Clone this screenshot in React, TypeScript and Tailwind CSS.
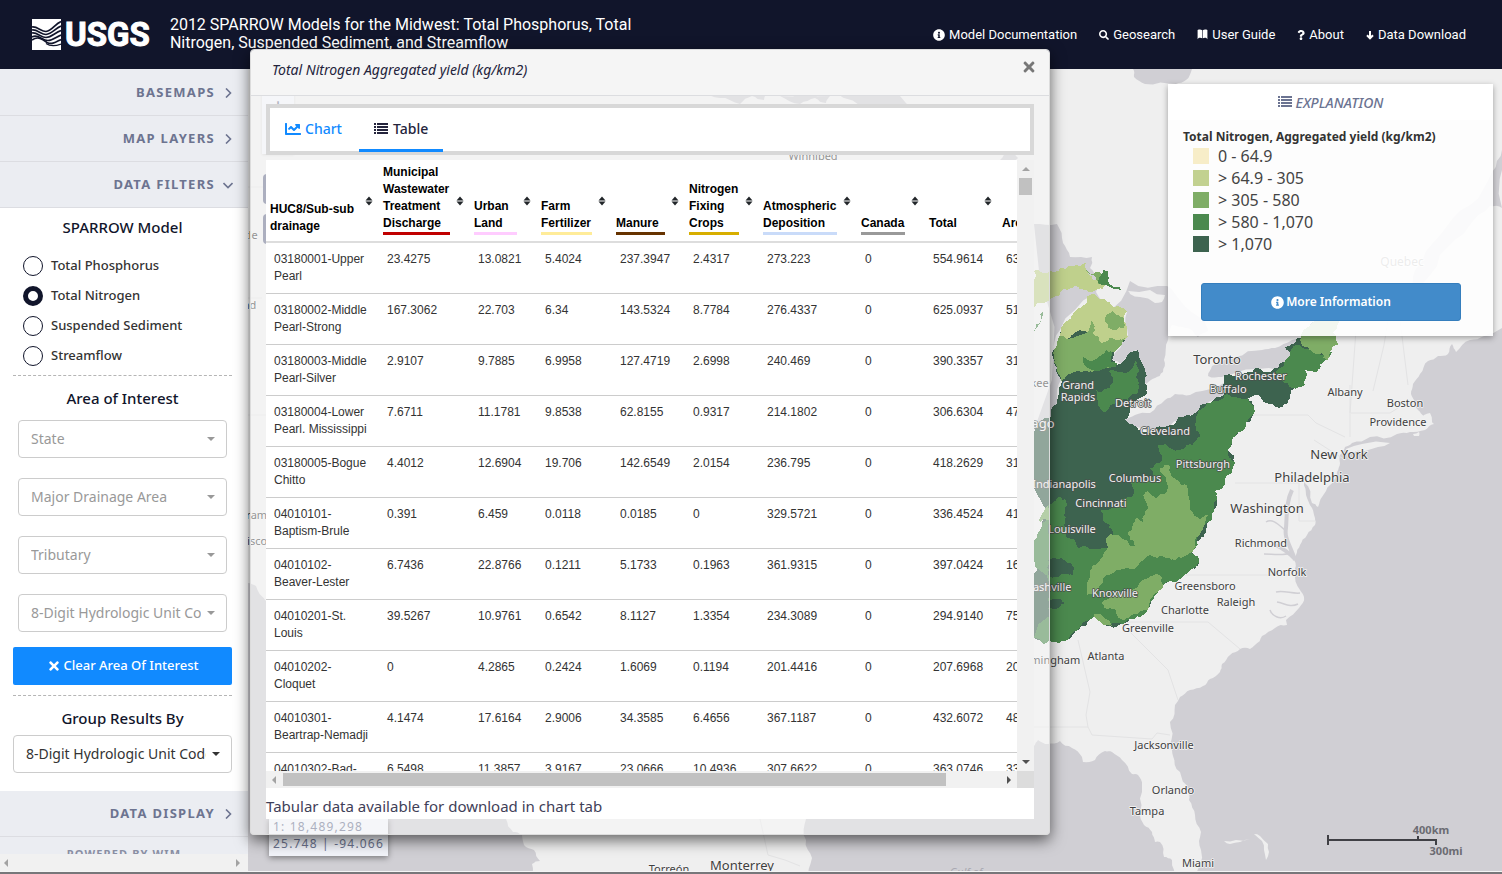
import React, { useState } from "react";
import { FaChartLine, FaInfoCircle, FaQuestion, FaSearch, FaTimes } from "react-icons/fa";

/* ---------- icons ---------- */

function ListIcon({ className }: { className: string }) {
  return (
    <svg viewBox="0 0 14 12" className={className} fill="currentColor" aria-hidden="true" shapeRendering="crispEdges">
      {[0, 3, 6, 9].map((y) => (
        <g key={y}>
          <rect x="0" y={y} width="2" height="2" />
          <rect x="3" y={y} width="11" height="2" />
        </g>
      ))}
    </svg>
  );
}

function SortIcon() {
  return (
    <svg viewBox="0 0 8 10" className="absolute right-[6px] top-1/2 h-[10px] w-2 -translate-y-1/2" fill="#212529" aria-hidden="true">
      <path d="M4 0.5 7.5 4.4H0.5zM4 9.5 0.5 5.6H7.5z" />
    </svg>
  );
}

function BookIcon() {
  return (
    <svg viewBox="0 0 11 11" className="size-[11px]" fill="currentColor" aria-hidden="true">
      <path d="M.6 1C2.4.3 4 .4 5.200 1.200V9.200C4 8.500 2.600 8.500 1.600 9L.6 10.300zM10.400 1C8.600.3 7 .4 5.800 1.200V9.200C7 8.500 8.400 8.500 9.400 9L10.400 10.300z" />
    </svg>
  );
}

function DownIcon() {
  return (
    <svg viewBox="0 0 8 10" className="h-[10px] w-2" fill="none" stroke="currentColor" strokeWidth="2" aria-hidden="true">
      <path d="M4 1V8.500M1 5.300 4 8.300 7 5.300" />
    </svg>
  );
}

function Chevron({ down = false }: { down?: boolean }) {
  return (
    <svg viewBox="0 0 10 10" className="size-[10px]" fill="none" stroke="#6d7490" strokeWidth="1.600" aria-hidden="true">
      <path d={down ? "M0.500 3 5 7.500 9.500 3" : "M3 0.500 7.500 5 3 9.500"} />
    </svg>
  );
}

function Logo() {
  return (
    <div className="flex h-8 items-center gap-1 text-white" aria-label="USGS">
      <svg viewBox="0 0 29 31" className="h-[31px] w-[29px]" aria-hidden="true">
        <path fill="#fff" d="M0 0H29V31H0z" />
        <g fill="none" stroke="#11152b" strokeWidth="1.700">
          <path d="M0 8C5 7 9 12.500 14 12.500 20 12 23 5 29 2.500" />
          <path d="M0 11C5 10 9 15.500 14 15.500 20 15 23 9.500 29 7" />
          <path d="M0 14C5 13 9 18.500 14 18.500 20 18 23 13.500 29 11.500" />
          <path d="M0 18C6 14.500 10 21.500 16 21.500 21 21.500 24 18 29 16" />
          <path d="M0 21C6 16.500 11 20.500 15 23.500 20 26 24 23 29 20.500" />
          <path d="M14 24.500C19 28 24 27 29 25" strokeWidth="1.200" />
        </g>
      </svg>
      <span className="font-['Liberation_Sans_Narrow','Roboto',sans-serif] text-[33px] leading-8 font-bold [-webkit-text-stroke:1px_white]">
        USGS
      </span>
    </div>
  );
}

/* ---------- map ---------- */

type Pt = [number, number];

const parse = (s: string): Pt[] => s.trim().split(/\s+/).map((p) => p.split(",").map(Number) as Pt);

/** Closed outline whose edges are broken up by deterministic midpoint displacement. */
function rough(s: string, amp = 0.22, depth = 3): string {
  let pts = parse(s);
  for (let d = 0; d < depth; d++) {
    const next: Pt[] = [];
    pts.forEach((a, i) => {
      const b = pts[(i + 1) % pts.length];
      const dx = b[0] - a[0];
      const dy = b[1] - a[1];
      next.push(a);
      if (Math.hypot(dx, dy) > 3) {
        const h = Math.sin((a[0] + b[0]) * 12.9898 + (a[1] + b[1]) * 78.233) * 43758.5453;
        const k = (h - Math.floor(h) - 0.5) * 2 * amp;
        next.push([(a[0] + b[0]) / 2 - dy * k, (a[1] + b[1]) / 2 + dx * k]);
      }
    });
    pts = next;
  }
  return "M" + pts.map((p) => p[0].toFixed(1) + " " + p[1].toFixed(1)).join("L") + "Z";
}

const WATER = "#d0cfd4";
const LAND = "#efefef";
const C = { light: "#bfd08c", mid: "#7fad66", green: "#4b894e", dark: "#3d634f" };

const WATERS = [
  "1502,328 1484,336 1470,340 1456,352 1452,344 1448,354 1438,356 1428,361 1420,374 1413,384 1411,394 1414,400 1418,410 1425,416 1430,418 1434,424 1425,430 1410,432 1397,434 1370,437 1352,443 1345,447 1340,455 1340,463 1337,472 1330,485 1322,497 1318,507 1312,503 1304,482 1306,495 1312,508 1315,518 1315,525 1307,535 1300,545 1296,555 1294,560 1295,572 1300,590 1304,597 1299,608 1286,620 1287,625 1275,628 1262,636 1255,645 1250,649 1240,649 1230,655 1222,664 1220,672 1210,679 1203,686 1190,690 1180,697 1175,705 1170,722 1170,745 1173,756 1180,772 1188,790 1189,800 1195,815 1201,832 1201,850 1195,880 1400,1000 1700,1000 1700,328",
  "1176,880 1172,860 1164,857 1160,842 1155,842 1152,832 1144,825 1140,812 1142,785 1138,775 1132,774 1122,760 1112,752 1105,751 1095,760 1083,762 1082,757 1072,748 1060,741 1048,744 1038,740 1034,746 1000,748 950,760 880,768 830,790 812,805 806,819 806,840 812,858 808,880",
  "248,583 256,586 266,601 300,650 350,720 420,760 480,790 506,819 513,832 522,835 524,845 534,850 540,861 532,864 534,880 400,1000 100,1000 100,700",
  "1133,69 1134,77 1145,84 1176,84 1186,80 1192,69 1180,60 1145,60",
  "1034,224 1057,224 1063,243 1070,257 1092,257 1090,268 1098,280 1096,292 1110,310 1108,318 1130,281 1167,286 1180,300 1205,322 1208,331 1198,337 1185,328 1172,325 1168,340 1164,360 1163,372 1155,378 1146,384 1142,362 1136,350 1122,364 1112,360 1128,335 1127,312 1094,294 1060,330 1054,355 1061,380 1057,400 1048,420 1034,430",
  "1123,420 1135,415 1150,413 1165,400 1175,394 1190,395 1215,389 1226,382 1226,396 1205,407 1185,418 1165,428 1150,433 1135,427",
  "1208,376 1212,366 1235,357 1262,350 1275,348 1292,340 1300,338 1295,352 1290,362 1280,370 1235,373 1222,377",
  "1502,150 1492,172 1470,205 1440,235 1415,270 1405,295 1412,292 1440,255 1470,225 1490,206 1502,208",
  "700,90 770,90 764,100 752,96 740,104 720,98",
  "835,92 900,96 930,120 905,118 870,110",
  "780,96 830,96 826,103 815,98 800,104",
  "1000,160 1010,150 1018,158 1012,162",
];

const ISLANDS = [
  "1128,291 1150,290 1165,295 1162,302 1155,303 1140,297 1130,294",
  "1346,449 1362,444 1390,443 1378,447 1365,451 1350,454",
  "1424,415 1430,413 1432,422 1426,428 1421,428",
  "1224,841 1236,840 1250,839 1240,842 1230,844",
  "1254,834 1260,836 1268,844 1269,852 1266,860 1264,850 1262,841",
  "1413,434 1419,432 1419,436 1414,436",
];

const BAYS = "M1295 560C1290 545 1284 538 1286 528 1287 515 1286 502 1292 490M1294 558C1288 552 1282 548 1276 545";

const INLETS =
  "M1285 530C1278 524 1272 518 1266 522M1300 593C1292 594 1284 590 1276 592M1298 604C1290 608 1284 603 1277 602M1286 616C1280 620 1272 616 1270 610M1290 553C1284 556 1272 554 1264 554";

const BORDERS =
  "M1200 415H1308L1316 423 1345 437M1235 483H1299V521H1315M1148 575H1296M1034 727H1088L1092 735 1152 739 1157 733 1170 735M1078 640 1090 692 1086 715 1088 727M1120 622H1208L1240 649M1120 622 1138 640 1168 670 1178 700M1350 437V385M1351 413H1390L1398 408M1350 413 1356 330M1373 391 1384 345 1388 320M1408 385 1400 320M1034 423H1093M1093 423V480M1192 415V470M1314 440 1345 460M248 187H266M248 415H266M248 298H262M760 819 768 855 785 860 800 866";

interface Zone {
  fill: string;
  pts: string;
}

const ZONES: Zone[] = [
  { fill: C.light, pts: "1034,271 1050,271 1070,266 1086,263 1086,269 1096,280 1108,284 1103,289 1094,291 1076,286 1062,290 1051,298 1044,303 1034,308" },
  { fill: C.mid, pts: "1086,270 1100,272 1103,285 1096,280" },
  { fill: C.green, pts: "1101,275 1103,270 1108,271 1109,284 1113,287 1120,287 1121,290 1112,288 1103,285 1098,281" },
  {
    fill: C.dark,
    pts: "1034,432 1050,418 1058,398 1061,385 1054,362 1054,350 1060,335 1061,327 1074,312 1080,308 1086,304 1087,296 1094,294 1106,300 1118,306 1127,312 1127,332 1125,340 1122,345 1114,352 1112,360 1120,364 1126,358 1130,352 1138,350 1142,362 1145,380 1145,396 1135,402 1130,408 1124,420 1130,424 1140,432 1155,430 1165,427 1195,413 1210,403 1224,395 1224,375 1245,373 1270,372 1278,368 1288,360 1290,352 1285,347 1298,338 1310,325 1322,312 1340,316 1333,332 1338,345 1330,352 1325,360 1318,371 1305,370 1305,385 1295,388 1290,395 1288,402 1275,407 1263,401 1257,395 1248,398 1254,406 1253,415 1240,425 1236,435 1232,445 1228,450 1235,463 1225,480 1215,492 1217,500 1208,522 1200,540 1192,552 1199,562 1190,570 1175,577 1165,583 1155,595 1148,608 1143,615 1132,618 1122,624 1110,626 1095,614 1087,624 1080,627 1072,636 1065,641 1054,642 1046,638 1034,638",
  },
  { fill: C.light, pts: "1061,327 1074,312 1080,308 1086,304 1087,296 1094,294 1106,300 1118,306 1127,312 1127,332 1125,340 1102,344 1092,334 1060,338" },
  { fill: C.mid, pts: "1105,322 1112,311 1116,315 1124,318 1124,328 1116,330 1108,328" },
  { fill: C.mid, pts: "1060,336 1086,333 1091,320 1093,333 1101,343 1112,338 1125,338 1122,345 1114,352 1108,355 1112,366 1095,370 1082,372 1075,372 1061,381 1054,362 1055,348" },
  { fill: C.green, pts: "1083,357 1092,361 1106,350 1112,352 1111,362 1118,364 1110,368 1095,371 1085,366" },
  { fill: C.green, pts: "1109,371 1122,372 1136,360 1136,378 1138,392 1128,400 1113,404 1105,412 1098,406 1096,390 1110,388" },
  {
    fill: C.green,
    pts: "1224,395 1210,403 1198,412 1195,425 1200,435 1193,445 1180,450 1165,443 1158,445 1162,460 1150,468 1152,478 1130,480 1133,495 1120,503 1098,508 1103,520 1112,530 1110,546 1098,549 1078,548 1068,538 1065,520 1066,500 1060,497 1048,505 1040,530 1034,540 1034,638 1054,642 1065,641 1080,627 1095,614 1110,626 1122,624 1143,615 1155,595 1165,583 1199,562 1192,552 1208,522 1217,500 1215,492 1225,480 1235,463 1228,450 1236,435 1253,415 1254,406 1248,398 1236,397",
  },
  { fill: C.dark, pts: "1048,560 1062,558 1072,565 1073,575 1058,577 1048,575" },
  { fill: C.dark, pts: "1044,602 1060,599 1065,603 1060,607 1045,607" },
  { fill: C.green, pts: "1288,358 1291,350 1296,345 1310,350 1332,352 1325,360 1318,371 1305,370 1305,385 1292,388 1282,380 1276,371 1284,366" },
  { fill: C.mid, pts: "1300,340 1312,324 1322,312 1340,316 1333,332 1338,345 1330,352 1327,361 1322,353 1312,351 1303,346" },
  {
    fill: C.mid,
    pts: "1160,468 1170,466 1176,480 1187,485 1190,510 1200,520 1208,515 1203,530 1195,540 1192,552 1175,560 1160,556 1140,562 1120,570 1103,578 1095,594 1087,595 1088,582 1098,563 1103,555 1110,534 1125,540 1135,546 1128,532 1137,518 1143,522 1143,495 1148,491 1156,498 1168,488 1163,475",
  },
  { fill: C.mid, pts: "1102,602 1120,592 1140,582 1162,577 1163,585 1150,600 1148,610 1130,616 1122,620 1116,610 1104,608" },
  { fill: C.mid, pts: "1094,614 1104,618 1112,626 1102,624" },
  { fill: C.mid, pts: "1038,520 1048,505 1050,520 1040,522" },
  { fill: C.green, pts: "1034,331 1040,314 1043,311 1041,320 1035,330" },
];

interface Label {
  t: string;
  x: number;
  y: number;
  s?: 11 | 12 | 13;
  inv?: boolean;
}

const LABELS: Label[] = [
  { t: "Toronto", x: 1217, y: 364, s: 13 },
  { t: "Rochester", x: 1261, y: 380, inv: true },
  { t: "Buffalo", x: 1228, y: 393, inv: true },
  { t: "Detroit", x: 1133, y: 407, inv: true },
  { t: "Cleveland", x: 1165, y: 435, inv: true },
  { t: "Pittsburgh", x: 1203, y: 468, inv: true },
  { t: "Columbus", x: 1135, y: 482, inv: true },
  { t: "Cincinnati", x: 1101, y: 507, inv: true },
  { t: "Louisville", x: 1072, y: 533, inv: true },
  { t: "Indianapolis", x: 1064, y: 488, inv: true },
  { t: "Nashville", x: 1048, y: 591, inv: true },
  { t: "Knoxville", x: 1115, y: 597, inv: true },
  { t: "Grand", x: 1078, y: 389, inv: true },
  { t: "Rapids", x: 1078, y: 401, inv: true },
  { t: "Chicago", x: 1030, y: 428, s: 13, inv: true },
  { t: "Milwaukee", x: 1021, y: 387 },
  { t: "Birmingham", x: 1048, y: 664 },
  { t: "Atlanta", x: 1106, y: 660 },
  { t: "Greenville", x: 1148, y: 632 },
  { t: "Charlotte", x: 1185, y: 614 },
  { t: "Raleigh", x: 1236, y: 606 },
  { t: "Greensboro", x: 1205, y: 590 },
  { t: "Norfolk", x: 1287, y: 576 },
  { t: "Richmond", x: 1261, y: 547 },
  { t: "Washington", x: 1267, y: 513, s: 13 },
  { t: "Philadelphia", x: 1312, y: 482, s: 13 },
  { t: "New York", x: 1339, y: 459, s: 13 },
  { t: "Providence", x: 1398, y: 426 },
  { t: "Boston", x: 1405, y: 407 },
  { t: "Albany", x: 1345, y: 396 },
  { t: "Jacksonville", x: 1164, y: 749 },
  { t: "Orlando", x: 1173, y: 794 },
  { t: "Tampa", x: 1147, y: 815 },
  { t: "Miami", x: 1198, y: 867 },
  { t: "Monterrey", x: 742, y: 870, s: 13 },
  { t: "Torreón", x: 669, y: 873 },
  { t: "Quebec", x: 1402, y: 266, s: 12 },
  { t: "Winnipeg", x: 813, y: 160 },
  { t: "Seattle", x: 240, y: 239 },
  { t: "Portland", x: 234, y: 309 },
  { t: "Sacram", x: 248, y: 519 },
  { t: "San Francisco", x: 232, y: 545 },
];

function MapCanvas() {
  return (
    <svg
      viewBox="248 69 1254 802"
      preserveAspectRatio="xMaxYMid slice"
      className="absolute inset-0 size-full bg-[#efefef]"
      role="img"
      aria-label="Map of total nitrogen aggregated yield"
    >
      <rect x="248" y="69" width="1254" height="802" fill={LAND} />
      {WATERS.map((p) => (
        <path key={p} d={rough(p, 0.12, 2)} fill={WATER} />
      ))}
      {ISLANDS.map((p) => (
        <path key={p} d={rough(p, 0.12, 1)} fill={LAND} />
      ))}
      <path d={BAYS} fill="none" stroke={WATER} strokeWidth="4" />
      <path d={INLETS} fill="none" stroke={WATER} strokeWidth="1.500" />
      <path d={BORDERS} fill="none" stroke="#e3e3e4" strokeWidth="1" />
      <g shapeRendering="crispEdges">
        {ZONES.map((z) => (
          <path key={z.pts} d={rough(z.pts)} fill={z.fill} />
        ))}
      </g>
      <g textAnchor="middle" strokeLinejoin="round" className="font-['Noto_Sans',sans-serif] [paint-order:stroke]">
        {LABELS.map((l) => (
          <text
            key={l.t}
            x={l.x}
            y={l.y}
            fontSize={l.s ?? 11}
            fill={l.inv ? "#f2f2f2" : "#3f3f3f"}
            stroke={l.inv ? "#4a4f4c" : "#f5f5f5"}
            strokeWidth="1.500"
          >
            {l.t}
          </text>
        ))}
        <text x="966" y="876" fontSize="11" fontStyle="italic" fill="#a9a9b2">
          Gulf of
        </text>
      </g>
      <path d="M1328 835V845M1327 840H1437M1418 840V836M1436 840V845" fill="none" stroke="#404045" strokeWidth="2" />
      <g fontSize="11" fontWeight="700" fill="#6b6b72" textAnchor="middle" className="font-['Noto_Sans',sans-serif]">
        <text x="1431" y="834">400km</text>
        <text x="1446" y="855">300mi</text>
      </g>
    </svg>
  );
}

const CLASSES = [
  { label: "0 - 64.9", swatch: "bg-[#f7edc8]" },
  { label: "> 64.9 - 305", swatch: "bg-[#c2d190]" },
  { label: "> 305 - 580", swatch: "bg-[#7fad66]" },
  { label: "> 580 - 1,070", swatch: "bg-[#4b894e]" },
  { label: "> 1,070", swatch: "bg-[#3d634f]" },
];

function Explanation() {
  return (
    <section className="absolute top-[15px] right-[9px] w-[325px] bg-white/90 shadow-[0_2px_6px_rgba(0,0,0,0.35)]">
      <h2 className="flex h-9 items-center justify-center gap-1 bg-white text-[14px] font-medium text-[#6b7391] italic">
        <ListIcon className="h-3 w-[14px]" />
        EXPLANATION
      </h2>
      <div className="px-[15px] pt-2 pb-[15px]">
        <h3 className="text-[12px] leading-[17px] font-bold text-[#333]">Total Nitrogen, Aggregated yield (kg/km2)</h3>
        <ul className="pl-[10px] text-[16px] leading-[22px] text-[#444]">
          {CLASSES.map((c) => (
            <li key={c.label} className="flex items-center gap-[9px]">
              <span className={"size-4 " + c.swatch} />
              {c.label}
            </li>
          ))}
        </ul>
        <div className="pt-7 pr-[17px] pl-[18px]">
          <button
            type="button"
            className="flex h-[38px] w-full items-center justify-center gap-[2px] rounded-[3px] border border-[#357ebd] bg-[#428bca] text-[12px] font-semibold text-white"
          >
            <FaInfoCircle className="size-[13px]" />
            More Information
          </button>
        </div>
      </div>
    </section>
  );
}

/* ---------- sidebar ---------- */

function SectionRow({ label, open = false }: { label: string; open?: boolean }) {
  return (
    <button
      type="button"
      aria-expanded={open}
      className="flex h-[46px] w-full shrink-0 items-center justify-end gap-2 border-b border-[#dcdde2] bg-[#ebedf2] pr-[15px] text-[13px] font-bold tracking-widest text-[#6d7490]"
    >
      {label}
      <Chevron down={open} />
    </button>
  );
}

function Picker({ label, muted = false }: { label: string; muted?: boolean }) {
  return (
    <label className={"relative block " + (muted ? "text-[#999]" : "text-[#333]")}>
      <span className="sr-only">{label}</span>
      <select className="h-[38px] w-full appearance-none rounded-[4px] border border-[#ccc] bg-white pr-[25px] pb-[2px] pl-3 text-[14px]">
        <option>{label}</option>
      </select>
      <svg viewBox="0 0 8 4" className="pointer-events-none absolute top-[17px] right-3 h-1 w-2" fill="currentColor" aria-hidden="true">
        <path d="M0 0H8L4 4z" />
      </svg>
    </label>
  );
}

const MODELS = ["Total Phosphorus", "Total Nitrogen", "Suspended Sediment", "Streamflow"];

function Sidebar() {
  const [model, setModel] = useState("Total Nitrogen");
  return (
    <aside className="flex w-[248px] shrink-0 flex-col overflow-hidden bg-white">
      <div className="flex min-h-0 flex-1 flex-col overflow-hidden border-t border-[#ebedf2]">
        <SectionRow label="BASEMAPS" />
        <SectionRow label="MAP LAYERS" />
        <SectionRow label="DATA FILTERS" open />
        <div className="shrink-0 pt-[7px] pr-4 pb-[18px] pl-[13px]">
          <fieldset className="border-b border-dashed border-[#b5b5b5] pb-1">
            <legend className="w-full pb-3 text-center text-[15px] leading-6 font-medium text-[#11152b]">SPARROW Model</legend>
            {MODELS.map((m) => (
              <label key={m} className="flex h-[30px] items-center gap-2 pl-[10px] text-[13px] font-medium text-[#333]">
                <input
                  type="radio"
                  name="model"
                  checked={model === m}
                  onChange={() => setModel(m)}
                  className="size-5 appearance-none rounded-full border border-[#11152b] bg-white checked:border-[5px]"
                />
                {m}
              </label>
            ))}
          </fieldset>
          <h3 className="pt-[10px] pb-[10px] text-center text-[15px] leading-6 font-medium text-[#11152b]">Area of Interest</h3>
          <div className="flex flex-col gap-5 px-[5px]">
            <Picker label="State" muted />
            <Picker label="Major Drainage Area" muted />
            <Picker label="Tributary" muted />
            <Picker label="8-Digit Hydrologic Unit Code" muted />
          </div>
          <button
            type="button"
            className="mt-[15px] flex h-[38px] w-full items-center justify-center gap-[3px] rounded-[2px] bg-[#118aff] text-[13px] font-medium text-white"
          >
            <FaTimes className="size-[14px]" />
            Clear Area Of Interest
          </button>
          <h3 className="mt-[10px] border-t border-dashed border-[#b5b5b5] pt-[10px] pb-[5px] text-center text-[15px] leading-6 font-medium text-[#11152b]">
            Group Results By
          </h3>
          <Picker label="8-Digit Hydrologic Unit Code" />
        </div>
        <SectionRow label="DATA DISPLAY" />
        <div className="shrink-0 bg-[#ebedf2] pt-[7px] pb-4 text-center text-[11px] leading-5 font-bold tracking-widest text-[#8a8fa3]">
          POWERED BY WIM
        </div>
      </div>
      <div className="flex h-[17px] shrink-0 items-center justify-between bg-[#f1f1f1] px-1 text-[#a3a3a3]">
        <svg viewBox="0 0 4 8" className="h-2 w-1" fill="currentColor" aria-hidden="true">
          <path d="M4 0V8L0 4z" />
        </svg>
        <svg viewBox="0 0 4 8" className="mr-1 h-2 w-1" fill="currentColor" aria-hidden="true">
          <path d="M0 0V8L4 4z" />
        </svg>
      </div>
    </aside>
  );
}

/* ---------- results window ---------- */

const COLUMNS = [
  { name: "HUC8/Sub-sub drainage", width: "w-[113px]", line: "" },
  { name: "Municipal Wastewater Treatment Discharge", width: "w-[91px]", line: "border-[#c00000]" },
  { name: "Urban Land", width: "w-[67px]", line: "border-[#ffccff]" },
  { name: "Farm Fertilizer", width: "w-[75px]", line: "border-[#ffec99]" },
  { name: "Manure", width: "w-[73px]", line: "border-[#663300]" },
  { name: "Nitrogen Fixing Crops", width: "w-[74px]", line: "border-[#d7ae00]" },
  { name: "Atmospheric Deposition", width: "w-[98px]", line: "border-[#c9dbf9]" },
  { name: "Canada", width: "w-[68px]", line: "border-[#999999]" },
  { name: "Total", width: "w-[73px]", line: "border-transparent" },
  { name: "Area", width: "w-[110px]", line: "border-transparent" },
];

const ROWS = [
  ["03180001-Upper Pearl", "23.4275", "13.0821", "5.4024", "237.3947", "2.4317", "273.223", "0", "554.9614", "63"],
  ["03180002-Middle Pearl-Strong", "167.3062", "22.703", "6.34", "143.5324", "8.7784", "276.4337", "0", "625.0937", "51"],
  ["03180003-Middle Pearl-Silver", "2.9107", "9.7885", "6.9958", "127.4719", "2.6998", "240.469", "0", "390.3357", "31"],
  ["03180004-Lower Pearl. Mississippi", "7.6711", "11.1781", "9.8538", "62.8155", "0.9317", "214.1802", "0", "306.6304", "47"],
  ["03180005-Bogue Chitto", "4.4012", "12.6904", "19.706", "142.6549", "2.0154", "236.795", "0", "418.2629", "31"],
  ["04010101-Baptism-Brule", "0.391", "6.459", "0.0118", "0.0185", "0", "329.5721", "0", "336.4524", "41"],
  ["04010102-Beaver-Lester", "6.7436", "22.8766", "0.1211", "5.1733", "0.1963", "361.9315", "0", "397.0424", "16"],
  ["04010201-St. Louis", "39.5267", "10.9761", "0.6542", "8.1127", "1.3354", "234.3089", "0", "294.9140", "75"],
  ["04010202-Cloquet", "0", "4.2865", "0.2424", "1.6069", "0.1194", "201.4416", "0", "207.6968", "20"],
  ["04010301-Beartrap-Nemadji", "4.1474", "17.6164", "2.9006", "34.3585", "6.4656", "367.1187", "0", "432.6072", "48"],
  ["04010302-Bad-Montreal", "6.5498", "11.3857", "3.9167", "23.0666", "10.4936", "307.6622", "0", "363.0746", "33"],
];

function ResultsTable() {
  return (
    <table className="w-[842px] table-fixed border-collapse text-left font-['Liberation_Sans',Arial,sans-serif] text-[12px] leading-[17px] text-[#333]">
      <thead>
        <tr className="border-b-2 border-[#ddd]">
          {COLUMNS.map((c) => (
            <th key={c.name} className={"relative pt-1 pr-5 pb-[6px] pl-1 align-bottom font-bold text-black " + c.width}>
              <span className={"block " + (c.line ? "border-b-[3px] " + c.line : "")}>{c.name}</span>
              {c.name !== "Area" && <SortIcon />}
            </th>
          ))}
        </tr>
      </thead>
      <tbody>
        {ROWS.map((r) => (
          <tr key={r[0]} className="border-b border-[#ccc]">
            {r.map((v, i) => (
              <td key={i} className={"py-2 pl-2 align-top " + (i === 0 ? "pr-2" : "")}>
                {v}
              </td>
            ))}
          </tr>
        ))}
      </tbody>
    </table>
  );
}

function ResultsWindow() {
  return (
    <div
      role="dialog"
      aria-label="Total Nitrogen Aggregated yield"
      className="absolute top-[49px] bottom-[39px] left-[250px] flex w-[800px] flex-col rounded-[4px] border border-[#dcdcdc] bg-[#f8f8f8]/45 shadow-[0_5px_15px_rgba(0,0,0,0.6)]"
    >
      <div className="flex h-[46px] shrink-0 items-start justify-between rounded-t-[3px] border-b border-[#dcdde0] bg-[#f5f5f5] pt-[9px] pr-[12px] pl-[21px]">
        <h2 className="text-[14px] leading-[22px] text-[#24243c] italic">Total Nitrogen Aggregated yield (kg/km2)</h2>
        <button type="button" aria-label="Close" className="text-[#777]">
          <FaTimes className="size-4" />
        </button>
      </div>
      <div className="flex min-h-0 flex-1 flex-col px-[15px] pt-2 pb-[15px]">
        <div role="tablist" className="flex h-[51px] shrink-0 border-4 border-[#d8d8d8] bg-white text-[14px] font-medium">
          <button type="button" role="tab" className="flex items-center gap-1 px-[15px] pb-[2px] text-[#118aff]">
            <FaChartLine className="size-4" />
            Chart
          </button>
          <button
            type="button"
            role="tab"
            aria-selected="true"
            className="-mb-px ml-[2px] flex items-center gap-[5px] border-b-[3px] border-[#118aff] px-[15px] text-[#24243c]"
          >
            <ListIcon className="h-3 w-[14px]" />
            Table
          </button>
        </div>
        <div className="mt-[5px] flex min-h-0 flex-1">
          <div className="min-w-0 flex-1 overflow-hidden bg-white">
            <ResultsTable />
          </div>
          <div className="flex w-[17px] shrink-0 flex-col items-center bg-[#f1f1f1]">
            <svg viewBox="0 0 8 4" className="my-[7px] h-1 w-2" fill="#a3a3a3" aria-hidden="true">
              <path d="M0 4H8L4 0z" />
            </svg>
            <div className="h-[17px] w-[13px] bg-[#c1c1c1]" />
            <svg viewBox="0 0 8 4" className="mt-auto mb-[7px] h-1 w-2" fill="#505050" aria-hidden="true">
              <path d="M0 0H8L4 4z" />
            </svg>
          </div>
        </div>
        <div className="flex h-[17px] shrink-0 items-center bg-[#f1f1f1]">
          <svg viewBox="0 0 4 8" className="mr-[7px] ml-[6px] h-2 w-1" fill="#a3a3a3" aria-hidden="true">
            <path d="M4 0V8L0 4z" />
          </svg>
          <div className="h-[13px] w-[663px] bg-[#c1c1c1]" />
          <svg viewBox="0 0 4 8" className="mr-[6px] ml-auto h-2 w-1" fill="#505050" aria-hidden="true">
            <path d="M0 0V8L4 4z" />
          </svg>
          <div className="h-full w-[17px] bg-[#dcdcdc]" />
        </div>
        <p className="h-[31px] shrink-0 bg-white pt-[7px] text-[15px] leading-[22px] text-[#3f4058]">
          Tabular data available for download in chart tab
        </p>
      </div>
    </div>
  );
}

/* ---------- page ---------- */

function NavLink({ icon, children }: { icon: React.ReactNode; children: React.ReactNode }) {
  return (
    <a href="#" className="flex items-center gap-1">
      {icon}
      {children}
    </a>
  );
}

export default function App() {
  return (
    <div className="relative flex h-screen flex-col overflow-hidden bg-[#efefef] font-['Noto_Sans',sans-serif]">
      <header className="flex h-[69px] shrink-0 items-center justify-between bg-[#11152b] pr-9 pl-8 font-['Roboto',sans-serif] text-white">
        <div className="flex items-center gap-5">
          <Logo />
          <h1 className="w-[472px] pb-[2px] text-[16px] leading-[18px]">
            2012 SPARROW Models for the Midwest: Total Phosphorus, Total Nitrogen, Suspended Sediment, and Streamflow
          </h1>
        </div>
        <nav className="flex gap-[22px] text-[13px]">
          <NavLink icon={<FaInfoCircle className="size-3" />}>Model Documentation</NavLink>
          <NavLink icon={<FaSearch className="size-[10px]" />}>Geosearch</NavLink>
          <NavLink icon={<BookIcon />}>User Guide</NavLink>
          <NavLink icon={<FaQuestion className="h-[10px] w-2" />}>About</NavLink>
          <NavLink icon={<DownIcon />}>Data Download</NavLink>
        </nav>
      </header>
      <div className="flex min-h-0 flex-1">
        <Sidebar />
        <main className="relative min-w-0 flex-1 overflow-hidden">
          <MapCanvas />
          <div className="absolute top-[11px] left-[14px] flex flex-col items-start text-[#7b8096]">
            <button type="button" aria-label="Zoom in" className="h-[74px] w-8 bg-[#f2f4fa] pb-6 text-[22px] shadow">
              +
            </button>
            <button type="button" aria-label="Home" className="mt-5 ml-px h-[30px] w-8 rounded-[4px] bg-[#6d7490]" />
            <button type="button" aria-label="Locate" className="mt-[10px] ml-px h-[30px] w-8 rounded-[4px] bg-[#6d7490]" />
          </div>
          <div className="absolute bottom-[15px] left-[21px] bg-[#f2f4fa] px-1 pb-1 text-[12px] leading-[17px] tracking-widest text-[#6d7490] shadow-[0_2px_6px_rgba(0,0,0,0.4)]">
            <div>1: 18,489,298</div>
            <div>25.748 | -94.066</div>
          </div>
          <Explanation />
        </main>
      </div>
      <div className="h-[3px] shrink-0 border-t border-[#f5f5f5] bg-[#77777a]" />
      <ResultsWindow />
    </div>
  );
}
